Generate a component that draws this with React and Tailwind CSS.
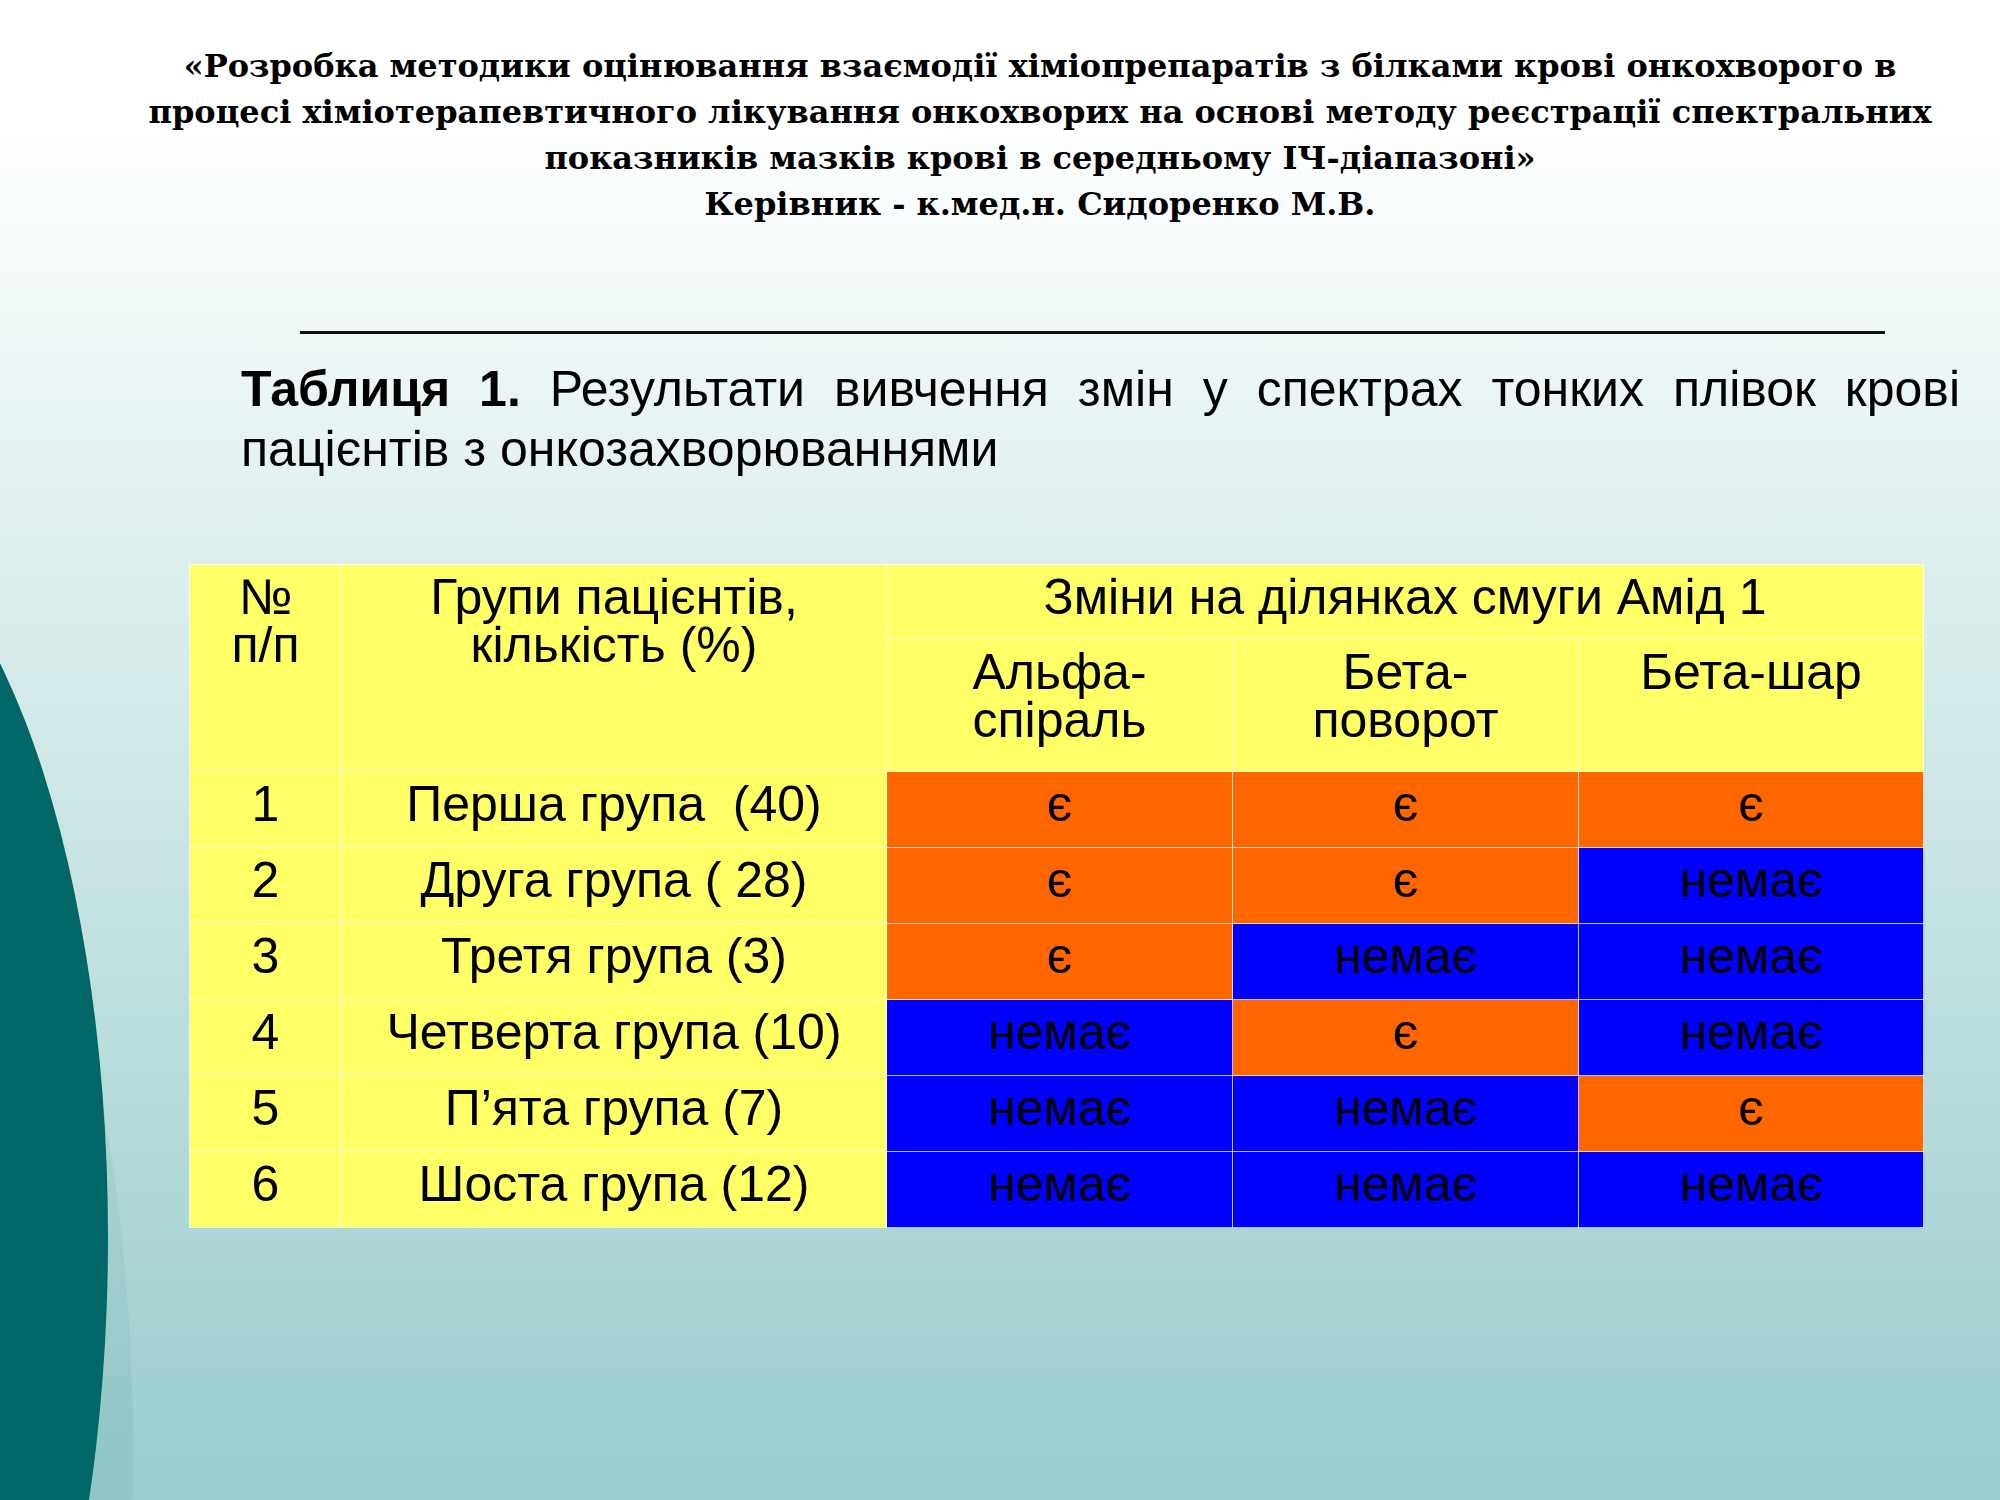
import React from "react";

const yes = { t: "є", c: "bg-[#ff6600]" };
const no = { t: "немає", c: "bg-[#0000ff]" };

const rows = [
  ["1", "Перша група\u00a0 (40)", [yes, yes, yes]],
  ["2", "Друга група ( 28)", [yes, yes, no]],
  ["3", "Третя група (3)", [yes, no, no]],
  ["4", "Четверта група (10)", [no, yes, no]],
  ["5", "П’ята група (7)", [no, no, yes]],
  ["6", "Шоста група (12)", [no, no, no]],
];

const cell = "border border-white/75 align-top text-center pt-[8px] leading-[48px]";

export default function App() {
  return (
    <div className="relative w-[2000px] h-[1500px] overflow-hidden bg-[linear-gradient(to_bottom,#ffffff_8%,#99cccc_100%)]">
      <svg className="absolute left-0 top-0" width="2000" height="1500" viewBox="0 0 2000 1500">
        <ellipse cx="-200" cy="1450" rx="333" ry="830" fill="#006666" fillOpacity="0.06" />
        <ellipse cx="-175" cy="1237" rx="283" ry="730" fill="#006666" />
      </svg>

      <div className="relative flex flex-col">
        <div className="pt-[43px] pl-[100px] pr-[20px] text-center text-[32px] leading-[46px] font-bold text-black [font-family:'DejaVu_Serif',serif]">
          «Розробка методики оцінювання взаємодії хіміопрепаратів з білками крові онкохворого в
          <br />
          процесі хіміотерапевтичного лікування онкохворих на основі методу реєстрації спектральних
          <br />
          показників мазків крові в середньому ІЧ-діапазоні»
          <br />
          Керівник - к.мед.н. Сидоренко М.В.
        </div>

        <div className="mt-[104px] ml-[300px] w-[1585px] h-[3px] bg-[#111]" />

        <div className="mt-[25px] ml-[241px] w-[1719px] text-[50px] leading-[60px] text-black [font-family:'Liberation_Sans',Arial,sans-serif]">
          <div className="text-justify [text-align-last:justify]">
            <span className="font-bold">Таблиця 1.</span> Результати вивчення змін у спектрах тонких плівок крові
          </div>
          <div>пацієнтів з онкозахворюваннями</div>
        </div>

        <table className="mt-[85px] ml-[189px] w-[1734px] table-fixed border-collapse text-[50px] text-black [font-family:'Liberation_Sans',Arial,sans-serif]">
          <colgroup>
            <col className="w-[152px]" />
            <col className="w-[545px]" />
            <col className="w-[346px]" />
            <col className="w-[346px]" />
            <col className="w-[345px]" />
          </colgroup>
          <tbody>
            <tr className="h-[75px]">
              <td rowSpan={2} className={`${cell} bg-[#ffff66]`}>
                №<br />п/п
              </td>
              <td rowSpan={2} className={`${cell} bg-[#ffff66]`}>
                Групи пацієнтів,<br />кількість (%)
              </td>
              <td colSpan={3} className={`${cell} bg-[#ffff66]`}>
                Зміни на ділянках смуги Амід 1
              </td>
            </tr>
            <tr className="h-[132px]">
              <td className={`${cell} bg-[#ffff66]`}>
                Альфа-<br />спіраль
              </td>
              <td className={`${cell} bg-[#ffff66]`}>
                Бета-<br />поворот
              </td>
              <td className={`${cell} bg-[#ffff66]`}>Бета-шар</td>
            </tr>
            {rows.map(([n, g, vals]) => (
              <tr key={n} className="h-[76px]">
                <td className={`${cell} bg-[#ffff66]`}>{n}</td>
                <td className={`${cell} bg-[#ffff66]`}>{g}</td>
                {vals.map((v, i) => (
                  <td key={i} className={`${cell} ${v.c}`}>
                    {v.t}
                  </td>
                ))}
              </tr>
            ))}
          </tbody>
        </table>
      </div>
    </div>
  );
}
